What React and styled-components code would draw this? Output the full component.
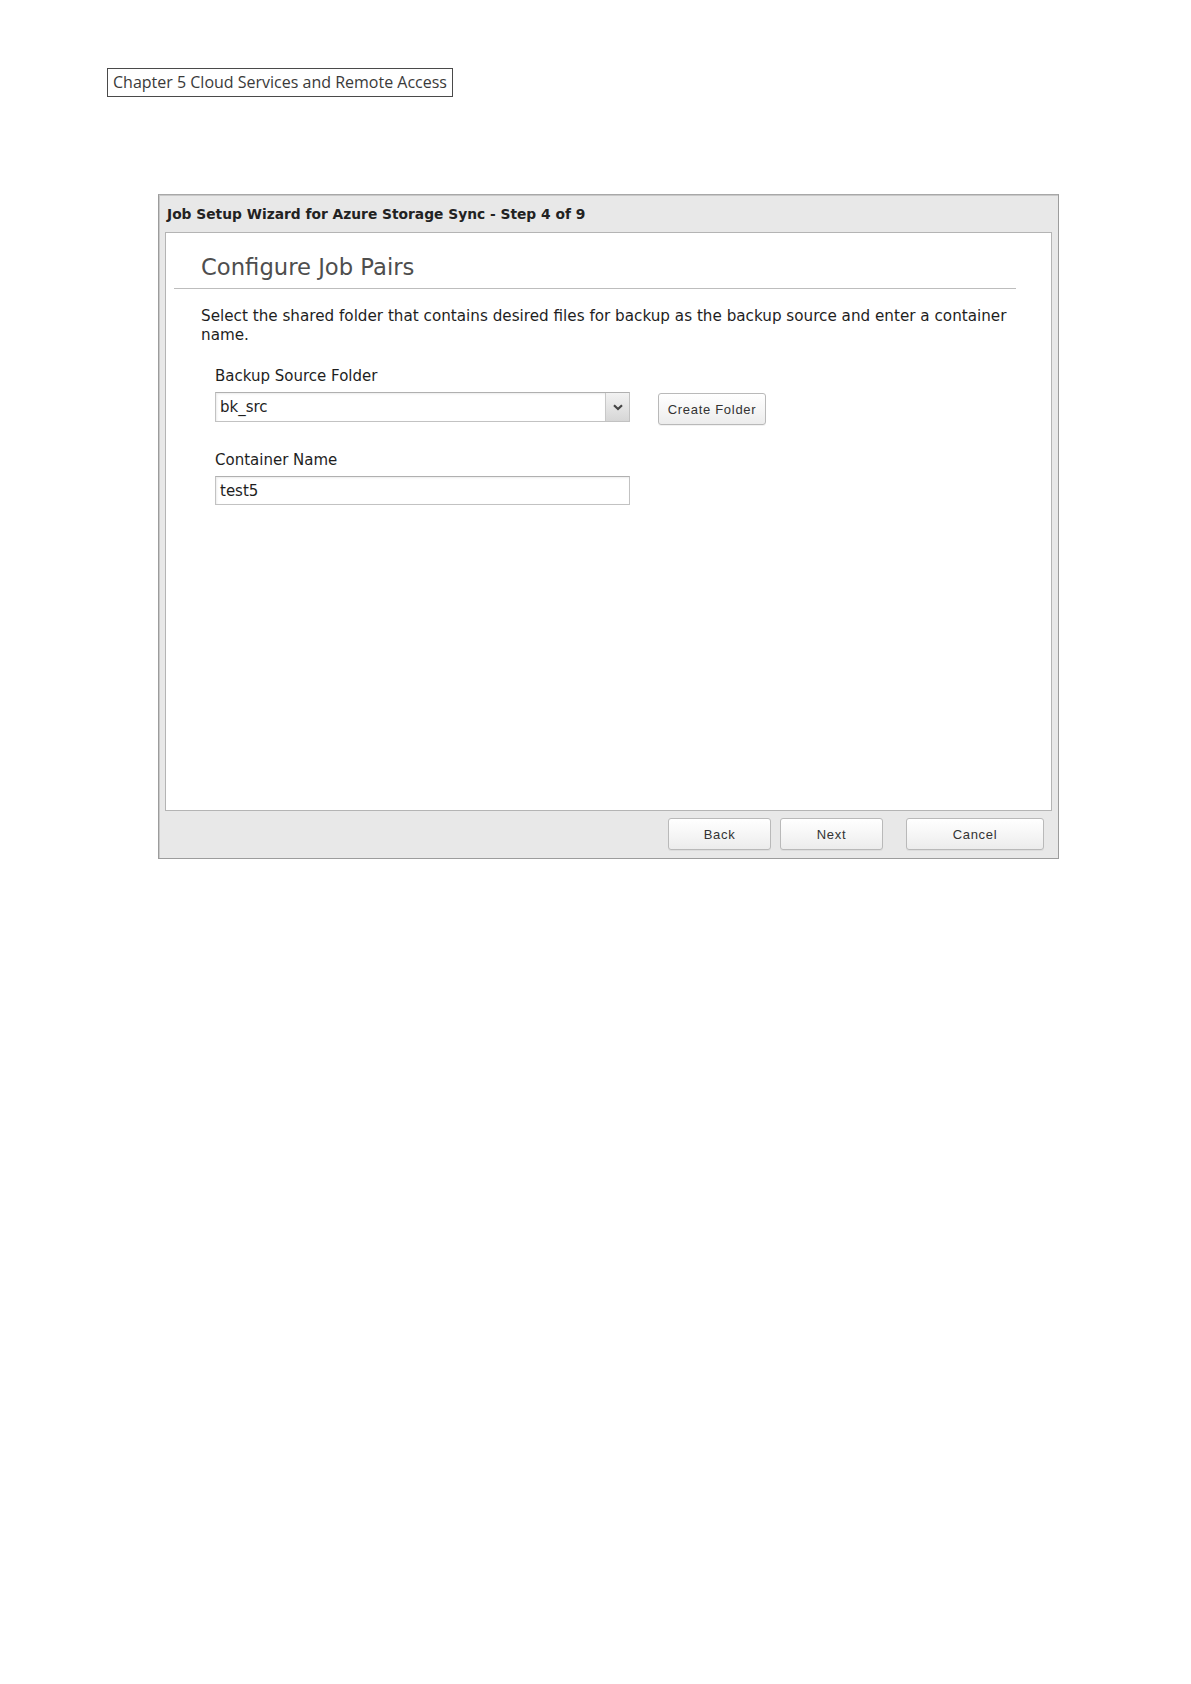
import React from "react";
import styled, { createGlobalStyle } from "styled-components";

const GlobalStyle = createGlobalStyle`
  * { box-sizing: border-box; }
  body {
    margin: 0;
    background: #fff;
    font-family: "DejaVu Sans", sans-serif;
  }
`;

const uiFont = `"DejaVu Sans", Verdana, sans-serif`;
const btnFont = `"Liberation Sans", Arial, sans-serif`;

const Page = styled.div`
  width: 1191px;
  min-height: 1684px;
  padding: 68px 0 0 107px;
`;

const ChapterTag = styled.div`
  display: inline-block;
  height: 29px;
  line-height: 27px;
  padding: 0 5px 0 5px;
  border: 1px solid #4a4a4a;
  font-family: "Open Sans", "Noto Sans", sans-serif;
  font-size: 16px;
  color: #3a3a3a;
`;

const Dialog = styled.div`
  margin: 97px 0 0 51px;
  width: 901px;
  height: 665px;
  border: 1px solid #9c9c9c;
  border-top-color: #a8a8a8;
  box-shadow: inset 1px 1px 0 #c8c8c8;
  background: #e8e8e8;
  padding: 0 6px 0 6px;
  display: flex;
  flex-direction: column;
`;

const TitleBar = styled.div`
  height: 37px;
  display: flex;
  align-items: center;
  padding-left: 2px;
  font-family: ${uiFont};
  font-weight: bold;
  font-size: 13.8px;
  color: #222;
`;

const Panel = styled.div`
  height: 579px;
  background: #fff;
  border: 1px solid #b4b4b4;
`;

const Heading = styled.h1`
  margin: 20px 0 0 35px;
  font-family: ${uiFont};
  font-weight: normal;
  font-size: 22.7px;
  line-height: 28px;
  color: #4e4e4e;
`;

const Rule = styled.hr`
  margin: 7px 35px 0 8px;
  border: 0;
  border-top: 1px solid #bdbdbd;
`;

const Intro = styled.p`
  margin: 18px 0 0 35px;
  font-family: ${uiFont};
  font-size: 15.2px;
  line-height: 19px;
  color: #1e1e1e;
`;

const Field = styled.div`
  margin: ${(p) => p.$top}px 0 0 49px;
`;

const Label = styled.div`
  font-family: ${uiFont};
  font-size: 15px;
  line-height: 19px;
  color: #1e1e1e;
  margin-bottom: 6px;
`;

const Row = styled.div`
  display: flex;
  align-items: flex-start;
  gap: 28px;
`;

const SelectBox = styled.div`
  width: 415px;
  height: 30px;
  display: flex;
  border: 1px solid #c2c2c2;
  border-top-color: #b0b0b0;
  background: #fff;
`;

const SelectValue = styled.div`
  flex: 1;
  padding-left: 4px;
  display: flex;
  align-items: center;
  font-family: ${uiFont};
  font-size: 15px;
  color: #1e1e1e;
  box-shadow: inset 1px 1px 2px rgba(0, 0, 0, 0.08);
`;

const DropButton = styled.div`
  width: 24px;
  border-left: 1px solid #c8c8c8;
  background: linear-gradient(#f2f2f2, #d6d6d6);
  display: flex;
  align-items: center;
  justify-content: center;
`;

const TextInput = styled.div`
  width: 415px;
  height: 29px;
  border: 1px solid #c2c2c2;
  border-top-color: #b0b0b0;
  padding-left: 4px;
  display: flex;
  align-items: center;
  font-family: ${uiFont};
  font-size: 15px;
  color: #1e1e1e;
  box-shadow: inset 1px 1px 2px rgba(0, 0, 0, 0.08);
`;

const Button = styled.button`
  width: ${(p) => p.$w}px;
  height: 32px;
  margin-top: ${(p) => p.$mt || 0}px;
  padding: 0;
  border: 1px solid #b9b9b9;
  border-radius: 3px;
  background: linear-gradient(#ffffff, #f6f6f6 50%, #ececec);
  box-shadow: 0 1px 0 rgba(0, 0, 0, 0.05);
  font-family: ${btnFont};
  font-size: 13px;
  letter-spacing: 0.7px;
  color: #333;
`;

const Footer = styled.div`
  flex: 1;
  display: flex;
  justify-content: flex-end;
  align-items: flex-start;
  padding: 7px 8px 0 0;
  gap: 9px;
`;

const Chevron = () => (
  <svg width="10" height="7" viewBox="0 0 10 7">
    <path d="M1 1.2 L5 5 L9 1.2" fill="none" stroke="#444" strokeWidth="2.2" />
  </svg>
);

export default function App() {
  return (
    <>
      <GlobalStyle />
      <Page>
        <ChapterTag>Chapter 5 Cloud Services and Remote Access</ChapterTag>
        <Dialog>
          <TitleBar>Job Setup Wizard for Azure Storage Sync - Step 4 of 9</TitleBar>
          <Panel>
            <Heading>Configure Job Pairs</Heading>
            <Rule />
            <Intro>
              Select the shared folder that contains desired files for backup as the backup source and enter a container
              <br />
              name.
            </Intro>
            <Field $top={22}>
              <Label>Backup Source Folder</Label>
              <Row>
                <SelectBox>
                  <SelectValue>bk_src</SelectValue>
                  <DropButton>
                    <Chevron />
                  </DropButton>
                </SelectBox>
                <Button $w={108} $mt={1}>Create Folder</Button>
              </Row>
            </Field>
            <Field $top={26}>
              <Label>Container Name</Label>
              <TextInput>test5</TextInput>
            </Field>
          </Panel>
          <Footer>
            <Button $w={103}>Back</Button>
            <Button $w={103}>Next</Button>
            <Button $w={138} style={{ marginLeft: 14 }}>Cancel</Button>
          </Footer>
        </Dialog>
      </Page>
    </>
  );
}
